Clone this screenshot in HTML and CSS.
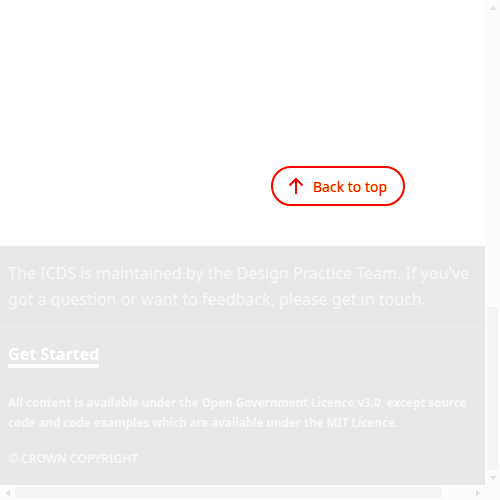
FILE: index.html
```html
<!DOCTYPE html>
<html lang="en">
<head>
<meta charset="utf-8">
<title>ICDS footer</title>
<link rel="stylesheet" href="styles.css">
</head>
<body>
<div class="frame">
  <div class="viewport">
    <div class="top-area">
      <a class="back-to-top" href="#">
        <svg class="arrow" width="16" height="18" viewBox="0 0 16 18" aria-hidden="true">
          <path d="M8 17V2M1.5 8.5L8 2l6.5 6.5" fill="none" stroke="#ff0000" stroke-width="2"/>
        </svg>
        <span>Back to top</span>
      </a>
    </div>
    <footer class="footer">
      <div class="footer-inner">
        <p class="intro">The ICDS is maintained by the Design Practice Team. If you've got a question or want to feedback, please get in touch.</p>
        <div class="links">
          <a class="get-started" href="#">Get Started</a>
        </div>
        <p class="licence">All content is available under the Open Government Licence v3.0, except source code and code examples which are available under the MIT Licence.</p>
        <p class="copyright">© CROWN COPYRIGHT</p>
      </div>
    </footer>
  </div>
  <div class="vscroll">
    <span class="arr arr-up"></span>
    <span class="vtrack"><span class="vthumb"></span></span>
    <span class="arr arr-down"></span>
  </div>
  <div class="hscroll">
    <span class="arr arr-left"></span>
    <span class="htrack"><span class="hthumb"></span></span>
    <span class="arr arr-right"></span>
  </div>
  <div class="corner"></div>
</div>
</body>
</html>
```
FILE: styles.css
```css
* { box-sizing: border-box; }
html, body { margin: 0; padding: 0; background: #ffffff; }
body { font-family: "Noto Sans", "Open Sans", sans-serif; overflow: hidden; }

.frame {
  width: 500px;
  height: 500px;
  display: grid;
  grid-template-columns: 485px 15px;
  grid-template-rows: 485px 15px;
}

.viewport {
  overflow: hidden;
  display: flex;
  flex-direction: column;
  background: #ffffff;
}

.top-area {
  height: 246px;
  flex: none;
  display: flex;
  justify-content: flex-end;
  align-items: flex-start;
  padding: 166px 80px 0 0;
}

.back-to-top {
  display: flex;
  align-items: center;
  gap: 9px;
  width: 134px;
  height: 40px;
  padding-left: 15px;
  border: 2px solid #ff0000;
  border-radius: 20px;
  box-shadow: 0 0 1px 0 #ffff00;
  color: #ff0000;
  text-decoration: none;
  font-size: 14px;
  font-weight: 400;
  text-shadow: 0 0 1px #ffff00;
}
.back-to-top .arrow { flex: none; }

.footer {
  flex: 1;
  background: #e8e8e8;
  color: #f7f7f7;
}

.footer-inner {
  width: 500px;
  padding: 14px 5px 0 8px;
}

.intro {
  margin: 0 -5px 0 -8px;
  padding: 0 5px 14px 8px;
  font-size: 16px;
  line-height: 26px;
  border-bottom: 1px solid #ededed;
}

.links { padding: 16px 0 0; height: 54px; }

.get-started {
  color: #ffffff;
  font-weight: 700;
  font-size: 16px;
  text-decoration: none;
  border-bottom: 4px solid #ffffff;
  line-height: 20px;
  display: inline-block;
}

.licence {
  margin: 12px 0 0;
  font-size: 11.6px;
  font-weight: 700;
  line-height: 20px;
}

.copyright {
  margin: 16px 0 0;
  font-size: 12px;
  font-weight: 600;
  line-height: 20px;
}

/* fake scrollbars */
.vscroll {
  background: #fcfcfc;
  display: flex;
  flex-direction: column;
  align-items: center;
}
.vtrack { flex: 1; width: 100%; display: flex; flex-direction: column; justify-content: flex-end; padding: 0 2px; }
.vthumb { height: 163px; background: #f4f4f4; }

.hscroll {
  background: #fcfcfc;
  display: flex;
  align-items: center;
}
.htrack { flex: 1; height: 100%; display: flex; padding: 2px 0; }
.hthumb { width: 427px; background: #f4f4f4; }

.corner { background: #fcfcfc; }

.arr { flex: none; width: 15px; height: 15px; display: flex; align-items: center; justify-content: center; }
.arr::before { content: ""; width: 0; height: 0; border: 4px solid transparent; }
.arr-up::before { border-bottom-color: #e2e2e2; border-top-width: 0; }
.arr-down::before { border-top-color: #e2e2e2; border-bottom-width: 0; }
.arr-left::before { border-right-color: #e2e2e2; border-left-width: 0; }
.arr-right::before { border-left-color: #e2e2e2; border-right-width: 0; }
```
